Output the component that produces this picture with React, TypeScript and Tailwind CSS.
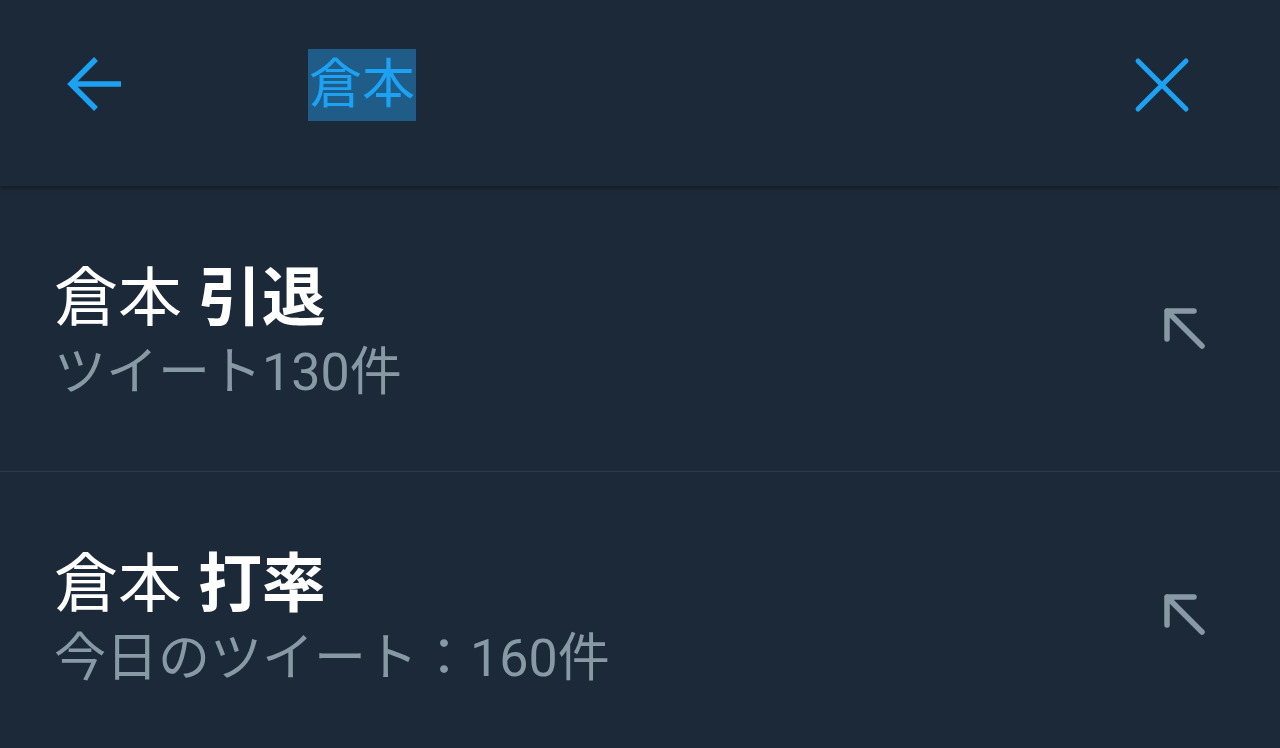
import React from "react";

const FONT = { fontFamily: "Roboto, 'Noto Sans CJK JP', sans-serif" };

function BackArrow() {
  return (
    <svg width="58" height="58" viewBox="0 0 58 58" fill="none">
      <path d="M55 28H6" stroke="#1da1f2" strokeWidth="5.5" />
      <path d="M30 3L5 28l25 25" stroke="#1da1f2" strokeWidth="5.5" strokeLinejoin="miter" />
    </svg>
  );
}

function CloseX() {
  return (
    <svg width="56" height="56" viewBox="0 0 56 56" fill="none">
      <path d="M4 4L52 52M52 4L4 52" stroke="#1da1f2" strokeWidth="5" strokeLinecap="round" />
    </svg>
  );
}

function UpLeft() {
  return (
    <svg width="42" height="42" viewBox="0 0 42 42" fill="none">
      <path d="M3 31V3H30M3 3L38 38" stroke="#8899a6" strokeWidth="5.5" strokeLinecap="round" strokeLinejoin="round" />
    </svg>
  );
}

function Row({ a, b, sub }: { a: string; b: string; sub: string }) {
  return (
    <div className="flex h-[286px] items-center border-b border-[#2f3a46] pl-[54px] pr-[74px]">
      <div className="flex flex-1 flex-col pt-[6px]">
        <div className="text-[64px] leading-[76px] text-white">
          <span>{a}</span> <span className="font-bold">{b}</span>
        </div>
        <div className="mt-[6px] text-[52px] leading-[60px] text-[#8899a6]">{sub}</div>
      </div>
      <UpLeft />
    </div>
  );
}

export default function App() {
  return (
    <div className="h-[748px] w-[1280px] overflow-hidden bg-[#1c2938]" style={FONT}>
      <div className="relative z-10 flex h-[186px] items-center bg-[#1c2938] pb-[16px] shadow-[0_2px_4px_rgba(0,0,0,0.35)]">
        <div className="ml-[66px] flex w-[242px]">
          <BackArrow />
        </div>
        <div className="flex-1">
          <span className="inline-block bg-[#1f5c87] px-[1px] text-[53px] leading-[72px] text-[#1da1f2]">倉本</span>
        </div>
        <div className="mr-[90px]">
          <CloseX />
        </div>
      </div>
      <Row a="倉本" b="引退" sub="ツイート130件" />
      <Row a="倉本" b="打率" sub="今日のツイート：160件" />
    </div>
  );
}
